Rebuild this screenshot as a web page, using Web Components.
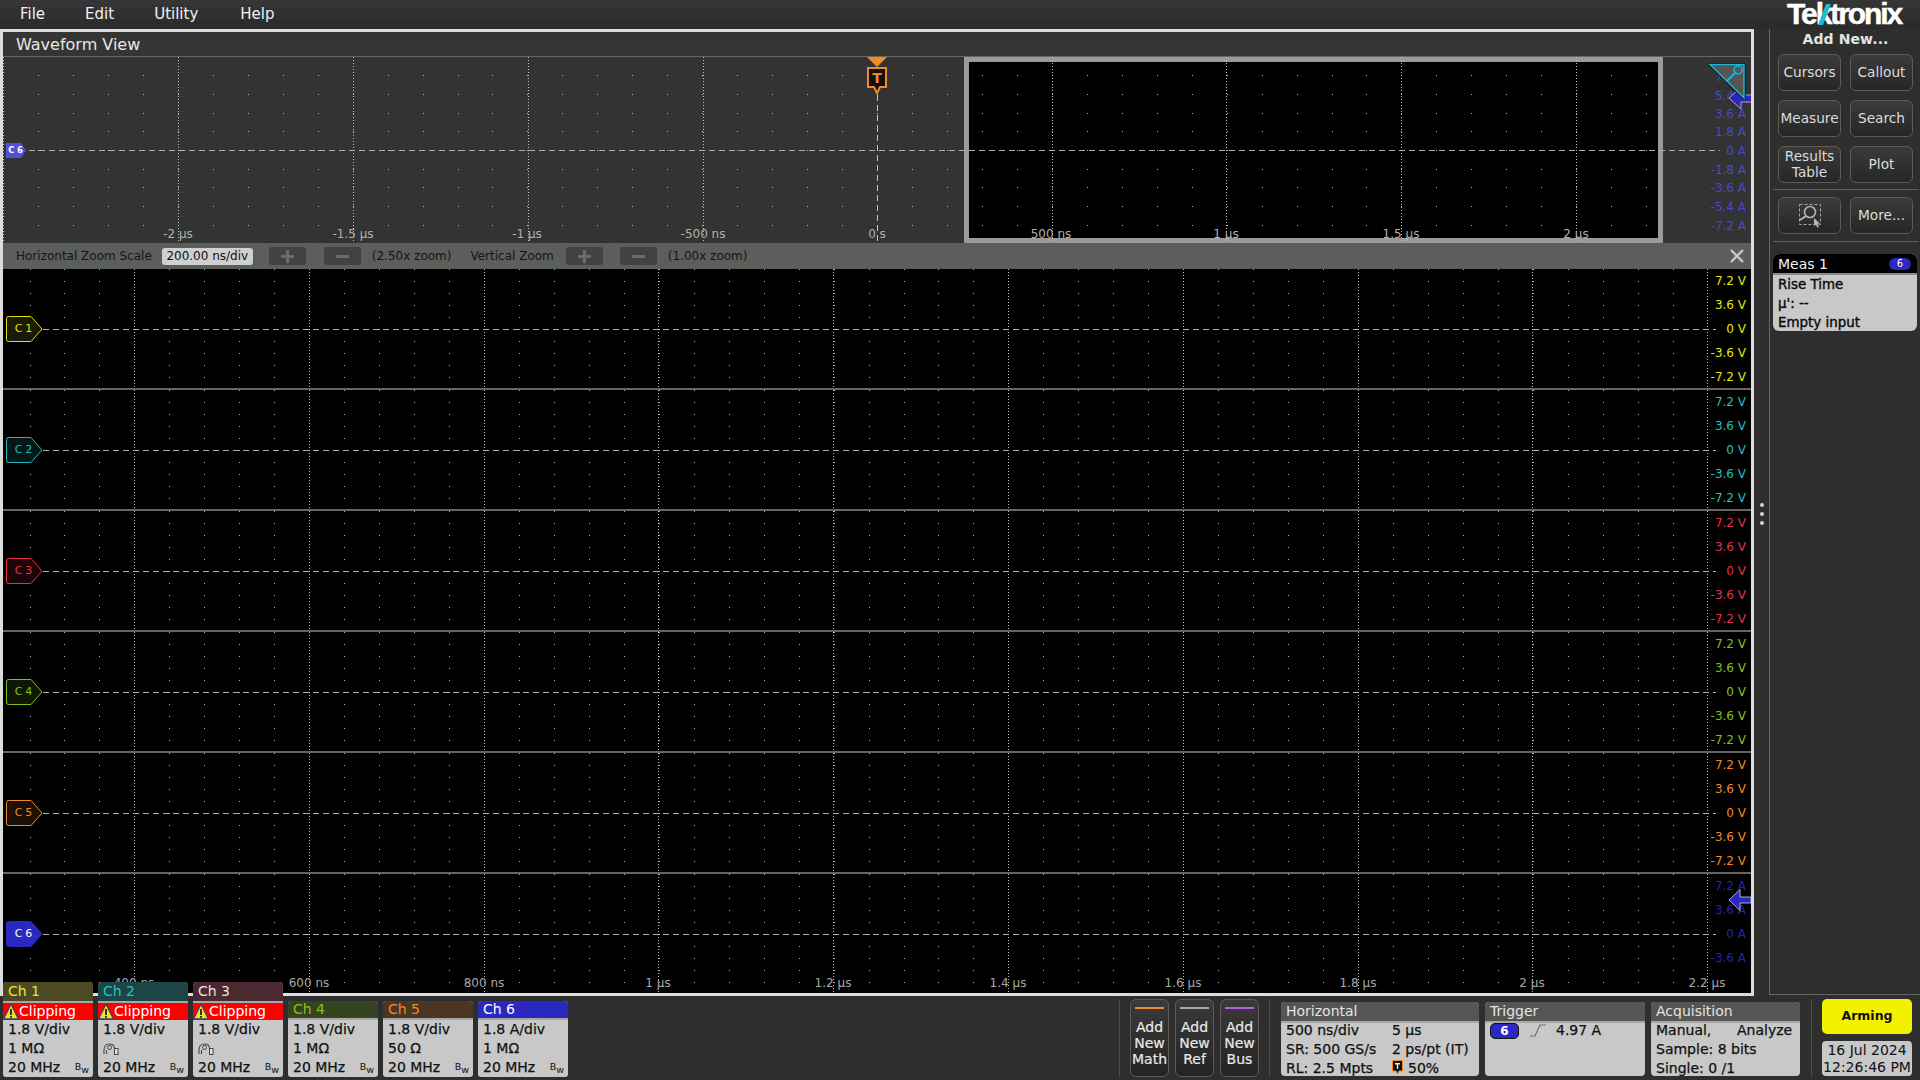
<!DOCTYPE html>
<html>
<head>
<meta charset="utf-8">
<title>Waveform View</title>
<style>
  html, body { margin: 0; background: #2e2e2e; }
  body { width: 1920px; height: 1080px; overflow: hidden; font-family: "DejaVu Sans", sans-serif; }
</style>
</head>
<body>
<scope-app></scope-app>
<script>
(function () {
    const BLUE = "#2a28c0";

    // dots and dotted lines of a plot, x and y in the coordinates of the plot
    function gridSvg(o) {
        let d = "";
        for (let x = o.x0; x <= o.x1 + 0.1; x += o.dx) {
            for (let k = -o.ny; k <= o.ny; k++) {
                let y = Math.round(o.cy + k * o.dy);
                if (y >= 0 && y < o.h) d += `M${Math.round(x)} ${y}h1v1h-1z`;
            }
        }
        let majors = o.majors.map(x =>
            `<line x1="${x}.5" x2="${x}.5" y1="0" y2="${o.h}" stroke="#c0c0c0" stroke-dasharray="1 2"/>`).join("");
        return `<svg width="1748" height="${o.h}" style="position:absolute;left:0;top:0" shape-rendering="crispEdges">
            <path d="${d}" fill="#b4b4b4"/>${majors}
            <line x1="${o.dash0}" x2="${o.dash1}" y1="${o.cy}.5" y2="${o.cy}.5" stroke="#b0b0b0" stroke-dasharray="6 4"/>
        </svg>`;
    }

    class MenuBar extends HTMLElement {
        connectedCallback() {
            this.attachShadow({ mode: "open" }).innerHTML = `
            <style>
              :host { display: flex; align-items: center; height: 29px; box-sizing: border-box; padding: 0 0 2px 20px; gap: 40px;
                      background: linear-gradient(#363636, #2a2a2a); color: #f0f0f0; font-size: 15px; position: relative; }
              .logo { margin-left: auto; margin-right: 19px; font: bold 30px "Liberation Sans", sans-serif; letter-spacing: -2.1px;
                      -webkit-text-stroke: .5px #fff; color: #fff; position: relative; line-height: 29px; }
              svg { position: absolute; left: 31px; top: 5px; }
            </style>
            <span>File</span><span>Edit</span><span>Utility</span><span style="margin-left:2px">Help</span>
            <span class="logo">Tektronix<svg width="13" height="21"><polygon points="8,0 13,0 5,21 0,21" fill="#1fb9d6"/></svg></span>`;
        }
    }

    class ChFlag extends HTMLElement {
        connectedCallback() {
            let c = this.getAttribute("color"), bg = this.getAttribute("bg"), txt = this.getAttribute("text") || c;
            this.attachShadow({ mode: "open" }).innerHTML = `
            <style>
              :host { position: absolute; left: 3px; display: block; width: 37px; height: 26px; }
              svg { position: absolute; left: 0; top: 0; }
              span { position: absolute; left: 0; width: 35px; top: 0; line-height: 26px; text-align: center; font-size: 11px; color: ${txt}; word-spacing: -.5px; white-space: nowrap; }
            </style>
            <svg width="37" height="26"><path d="M2.5 .5H25L36 13 25 25.5H2.5Q.5 25.5 .5 23.5V2.5Q.5 .5 2.5 .5Z" fill="${bg}" stroke="${c}"/></svg>
            <span>${this.getAttribute("label")}</span>`;
        }
    }

    class PlotRow extends HTMLElement {
        connectedCallback() {
            let color = this.getAttribute("color"), unit = this.getAttribute("unit");
            let vals = (this.getAttribute("vals") || "7.2,3.6,0,-3.6,-7.2").split(",");
            let ys = { "7.2": 12, "3.6": 36, "0": 60, "-3.6": 84, "-7.2": 108 };
            let labels = vals.map(v => `<i style="top:${ys[v] - 8}px">${v} ${unit}</i>`).join("");
            let majors = [];
            for (let k = 0; k < 10; k++) majors.push(Math.round(131 + k * 174.8));
            let last = this.hasAttribute("last");
            let times = ["400 ns", "600 ns", "800 ns", "1 µs", "1.2 µs", "1.4 µs", "1.6 µs", "1.8 µs", "2 µs", "2.2 µs"];
            let axis = last ? times.map((t, k) => `<b style="left:${majors[k]}px">${t}</b>`).join("") : "";
            this.attachShadow({ mode: "open" }).innerHTML = `
            <style>
              :host { display: block; position: relative; height: ${last ? 119 : 121}px; box-sizing: border-box;
                      ${last ? "" : "border-bottom: 2px solid #666;"} background: #000; overflow: hidden; }
              i { position: absolute; right: 5px; font-style: normal; font-size: 12px; line-height: 16px; color: ${color}; }
              b { position: absolute; top: 101px; font-weight: normal; font-size: 12px; line-height: 16px; color: #a8a8a8; transform: translateX(-50%); white-space: nowrap; }
            </style>
            ${gridSvg({ x0: 26.5, x1: 1673, dx: 34.96, cy: 60, dy: 12, ny: 5, h: 119, majors: majors, dash0: 40, dash1: 1713 })}
            ${labels}${axis}
            <slot></slot>`;
        }
    }

    class OverviewPlot extends HTMLElement {
        connectedCallback() {
            let majors = [0, 175, 350, 525, 700, 1049, 1223, 1398, 1573];
            let times = ["-2 µs", "-1.5 µs", "-1 µs", "-500 ns", "0 s", "500 ns", "1 µs", "1.5 µs", "2 µs"];
            let xs = [175, 350, 524, 700, 874, 1048, 1223, 1398, 1573];
            let axis = times.map((t, k) => `<b style="left:${xs[k]}px">${t}</b>`).join("");
            let amps = [["7.2", 20], ["5.4", 39], ["3.6", 57], ["1.8", 75], ["0", 94], ["-1.8", 113], ["-3.6", 131], ["-5.4", 150], ["-7.2", 169]];
            let labels = amps.map(a => `<i style="top:${a[1] - 8}px">${a[0]} A</i>`).join("");
            this.attachShadow({ mode: "open" }).innerHTML = `
            <style>
              :host { display: block; position: relative; height: 186px; background: #333; overflow: hidden; }
              .window { position: absolute; left: 961px; top: 0; width: 689px; height: 176px; border: 5px solid #9a9a9a; background: #000; }
              i { position: absolute; right: 5px; font-style: normal; font-size: 12px; line-height: 16px; color: #4a4ac4; }
              b { position: absolute; top: 169px; font-weight: normal; font-size: 12px; line-height: 16px; color: #b0b0b0; transform: translateX(-50%); white-space: nowrap; }
              svg.mark { position: absolute; left: 0; top: 0; }
              text { font: bold 14px "DejaVu Sans", sans-serif; }
            </style>
            <div class="window"></div>
            ${gridSvg({ x0: 35, x1: 1678, dx: 34.96, cy: 93, dy: 18.7, ny: 4, h: 186, majors: majors, dash0: 26, dash1: 1717 })}
            ${labels}${axis}
            <svg class="mark" width="1748" height="186">
              <line x1="874.5" x2="874.5" y1="38" y2="186" stroke="#c8c8c8" stroke-dasharray="6 4"/>
              <polygon points="864,0 884,0 874,10" fill="#f08a24"/>
              <path d="M865 11H883V30H877L874 36 871 30H865Z" fill="#111" stroke="#f08a24" stroke-width="2"/>
              <text x="874" y="26" text-anchor="middle" fill="#f08a24">T</text>
              <path d="M1726 41L1738 30V38H1749V45H1738V52Z" fill="${BLUE}" stroke="#a9a9c8"/>
              <polygon points="1707,7.5 1741,7.5 1741,41" fill="#555" stroke="#000" stroke-width="3" stroke-linejoin="round"/>
              <polygon points="1707,7.5 1741,7.5 1741,41" fill="#555" stroke="#1cb8d8" stroke-width="1.5"/>
              <line x1="1724" y1="24" x2="1733" y2="15" stroke="#1cb8d8" stroke-width="2"/>
              <circle cx="1735" cy="13" r="4" fill="none" stroke="#1cb8d8" stroke-width="1.5"/>
            </svg>
            <ov-flag></ov-flag>`;
        }
    }

    class OvFlag extends HTMLElement {
        connectedCallback() {
            this.attachShadow({ mode: "open" }).innerHTML = `
            <style>
              :host { position: absolute; left: 3px; top: 86px; width: 20px; height: 15px; display: block; }
              svg { position: absolute; left: 0; top: 0; }
              span { position: absolute; left: 0; width: 19px; text-align: center; line-height: 15px; font-size: 8.5px; font-weight: bold; word-spacing: -.5px; color: #fff; white-space: nowrap; }
            </style>
            <svg width="20" height="15"><path d="M0 0H15L20 7.5 15 15H0Z" fill="#5050d8"/></svg>
            <span>C 6</span>`;
        }
    }

    class ZoomBar extends HTMLElement {
        connectedCallback() {
            this.attachShadow({ mode: "open" }).innerHTML = `
            <style>
              :host { display: flex; align-items: center; height: 26px; background: #5c5e5c; color: #141414; font-size: 12px; white-space: nowrap; position: relative; }
              .val { box-sizing: border-box; width: 91px; height: 17px; line-height: 17px; background: #d0d0d0; border-radius: 3px; text-align: center; color: #111; margin-left: 10px; }
              .btn { box-sizing: border-box; width: 37px; height: 18px; background: #414241; border-radius: 3px; position: relative; }
              .btn svg { position: absolute; left: 12px; top: 3px; }
              .close { position: absolute; right: 7px; top: 6px; }
            </style>
            <span style="margin-left:13px">Horizontal Zoom Scale</span>
            <span class="val">200.00 ns/div</span>
            <span class="btn" style="margin-left:16px"><svg width="13" height="13"><path d="M5 0h3v5h5v3H8v5H5V8H0V5h5z" fill="#6c6c6c"/></svg></span>
            <span class="btn" style="margin-left:18px"><svg width="13" height="13"><path d="M0 5h13v3H0z" fill="#6c6c6c"/></svg></span>
            <span style="margin-left:11px">(2.50x zoom)</span>
            <span style="margin-left:19px">Vertical Zoom</span>
            <span class="btn" style="margin-left:12px"><svg width="13" height="13"><path d="M5 0h3v5h5v3H8v5H5V8H0V5h5z" fill="#6c6c6c"/></svg></span>
            <span class="btn" style="margin-left:17px"><svg width="13" height="13"><path d="M0 5h13v3H0z" fill="#6c6c6c"/></svg></span>
            <span style="margin-left:11px">(1.00x zoom)</span>
            <svg class="close" width="14" height="14"><path d="M1 1L13 13M13 1L1 13" stroke="#c8c8c8" stroke-width="2.4"/></svg>`;
        }
    }

    class WaveformView extends HTMLElement {
        connectedCallback() {
            this.attachShadow({ mode: "open" }).innerHTML = `
            <style>
              :host { display: block; width: 1754px; height: 967px; box-sizing: border-box; border: 3px solid #dcdcdc; background: #000; position: relative; }
              .title { height: 25px; box-sizing: border-box; border-bottom: 1px solid #666; background: #353533; color: #e8e8e8; font-size: 16px; line-height: 26px; padding-left: 13px; }
            </style>
            <div class="title">Waveform View</div>
            <overview-plot></overview-plot>
            <zoom-bar></zoom-bar>
            <plot-row color="#e8e800" unit="V"><ch-flag style="top:47px" label="C 1" color="#e0e000" bg="#1a1a06"></ch-flag></plot-row>
            <plot-row color="#20c0c4" unit="V"><ch-flag style="top:47px" label="C 2" color="#20b8bc" bg="#04181a"></ch-flag></plot-row>
            <plot-row color="#e83048" unit="V"><ch-flag style="top:47px" label="C 3" color="#e83048" bg="#1c0508"></ch-flag></plot-row>
            <plot-row color="#84c020" unit="V"><ch-flag style="top:47px" label="C 4" color="#84c020" bg="#0f1804"></ch-flag></plot-row>
            <plot-row color="#f08a24" unit="V"><ch-flag style="top:47px" label="C 5" color="#f08a24" bg="#1c1005"></ch-flag></plot-row>
            <plot-row color="#2424b8" unit="A" vals="7.2,3.6,0,-3.6" last>
              <ch-flag style="top:47px" label="C 6" color="${BLUE}" bg="${BLUE}" text="#fff"></ch-flag>
              <svg width="26" height="24" style="position:absolute;right:0;top:14px"><path d="M4 12L15 1.5V9H26V15H15V22.5Z" fill="${BLUE}" stroke="#a9a9c8"/></svg>
            </plot-row>`;
        }
    }

    class SideButton extends HTMLElement {
        connectedCallback() {
            this.attachShadow({ mode: "open" }).innerHTML = `
            <style>
              :host { display: flex; align-items: center; justify-content: center; text-align: center; box-sizing: border-box; width: 63px; height: 37px; padding-bottom: 2px;
                      border: 1px solid #5e5a54; border-radius: 6px; background: linear-gradient(#3b3b3b, #262626); color: #dcdcdc; font-size: 13.7px; line-height: 16px; white-space: nowrap; }
            </style>
            <slot></slot>`;
        }
    }

    class MeasBadge extends HTMLElement {
        connectedCallback() {
            this.attachShadow({ mode: "open" }).innerHTML = `
            <style>
              :host { display: block; width: 144px; border-radius: 6px; overflow: hidden; background: #c8c8c8; color: #0c0c0c; font-size: 13.4px; -webkit-text-stroke: .4px #0c0c0c; line-height: 19px; }
              .head { height: 19px; background: #000; border-bottom: 2px solid #8a8a8a; color: #f2f2f2; font-size: 14px; -webkit-text-stroke: 0; line-height: 18px; padding-left: 5px; display: flex; align-items: center; justify-content: space-between; }
              .pill { width: 22px; height: 12px; margin-right: 6px; border-radius: 6px; background: ${BLUE}; color: #fff; font-size: 10px; line-height: 12px; text-align: center; }
              .body { padding: 0 5px 0 5px; height: 56px; white-space: nowrap; }
            </style>
            <div class="head"><span>Meas 1</span><span class="pill">6</span></div>
            <div class="body">Rise Time<br>µ': --<br>Empty input</div>`;
        }
    }

    class SidePanel extends HTMLElement {
        connectedCallback() {
            this.attachShadow({ mode: "open" }).innerHTML = `
            <style>
              :host { display: block; position: relative; width: 166px; height: 967px; box-sizing: border-box; padding-left: 15px; }
              .box { height: 966px; box-sizing: border-box; border-left: 1px solid #686868; border-bottom: 1px solid #686868; }
              h3 { margin: 0; height: 25px; font-size: 14px; line-height: 21px; text-align: center; color: #e4e4e4; width: 151px; letter-spacing: .1px; }
              .btns { display: grid; grid-template-columns: 63px 63px; column-gap: 9px; row-gap: 9px; padding-left: 8px; }
              hr { margin: 6px 1px 7px 3px; border: 0; height: 1px; background: #5e5e5e; }
              meas-badge { margin: 12px 0 0 3px; }
              .grip { position: absolute; left: 6px; top: 474px; width: 4px; }
              .grip u { display: block; width: 4px; height: 4px; border-radius: 50%; margin-bottom: 5px; background: #d4d4d4; }
            </style>
            <div class="grip"><u></u><u></u><u></u></div>
            <div class="box">
              <h3>Add New...</h3>
              <div class="btns">
                <side-button>Cursors</side-button><side-button>Callout</side-button>
                <side-button>Measure</side-button><side-button>Search</side-button>
                <side-button>Results<br>Table</side-button><side-button>Plot</side-button>
              </div>
              <hr>
              <div class="btns">
                <side-button>
                  <svg width="30" height="26" viewBox="0 0 30 26">
                    <rect x="4.5" y="2.5" width="21" height="20" fill="none" stroke="#a8a8a8" stroke-dasharray="3 2"/>
                    <circle cx="15" cy="10" r="5.5" fill="none" stroke="#b4b4b4" stroke-width="1.6"/>
                    <line x1="11" y1="14" x2="5" y2="18" stroke="#b4b4b4" stroke-width="2"/>
                    <path d="M19 16l6 5.5-2.6.2 1.6 3.3-1.6.7-1.5-3.3-2 1.8z" fill="#b8b8b8"/>
                  </svg>
                </side-button>
                <side-button>More...</side-button>
              </div>
              <hr style="margin-top:7px">
              <meas-badge></meas-badge>
            </div>`;
        }
    }

    class ChBadge extends HTMLElement {
        connectedCallback() {
            let clip = this.hasAttribute("clip");
            let probe = this.hasAttribute("probe");
            let warn = `<svg width="16" height="17" viewBox="0 0 16 17"><polygon points="8,1 15.4,16 .6,16" fill="#f2e21c" stroke="#3c3c70" stroke-width="1.3"/><rect x="7.1" y="6" width="1.8" height="6" fill="#222"/><rect x="7.1" y="13" width="1.8" height="1.8" fill="#222"/></svg>`;
            let probeIcon = `<svg width="16" height="12" viewBox="0 0 16 12"><path d="M1 11V7Q1 1 6.5 1 11 1 11.5 5M3.5 11V7" fill="none" stroke="#444" stroke-width="1.1"/><circle cx="6.5" cy="4.5" r="2" fill="none" stroke="#444"/><rect x="11.5" y="5.5" width="3.5" height="6" fill="#e4e4e4" stroke="#444"/></svg>`;
            this.attachShadow({ mode: "open" }).innerHTML = `
            <style>
              :host { display: block; width: 90px; border-radius: 4px 4px 3px 3px; overflow: hidden; background: #c8c8c8; color: #111; font-size: 14px; line-height: 19px; -webkit-text-stroke: .25px #111; white-space: nowrap; }
              .head { box-sizing: border-box; height: ${clip ? 21 : 19}px; border-bottom: 2px solid #a8a8a8; background: ${this.getAttribute("bg")}; color: ${this.getAttribute("color")}; padding-left: 5px; line-height: ${clip ? 19 : 17}px; -webkit-text-stroke: 0; }
              .clip { height: 17px; background: #f00; color: #fff; display: flex; align-items: center; line-height: 17px; -webkit-text-stroke: 0; }
              .clip svg { flex: none; }
              .body { height: 57px; padding-left: 5px; position: relative; }
              .row { height: 19px; display: flex; align-items: center; }
              .bw { position: absolute; right: 4px; bottom: 5px; font-size: 9.5px; line-height: 10px; -webkit-text-stroke: 0; }
              .bw sub { font-size: 9.5px; line-height: 0; vertical-align: -3px; }
            </style>
            <div class="head">${this.getAttribute("name")}</div>
            ${clip ? `<div class="clip">${warn}Clipping</div>` : ""}
            <div class="body">
              <div class="row">${this.getAttribute("scale")}</div>
              <div class="row">${probe ? probeIcon : this.getAttribute("term")}</div>
              <div class="row">20 MHz</div>
              <span class="bw">B<sub>w</sub></span>
            </div>`;
        }
    }

    class AddButton extends HTMLElement {
        connectedCallback() {
            this.attachShadow({ mode: "open" }).innerHTML = `
            <style>
              :host { display: block; box-sizing: border-box; width: 39px; height: 78px; border: 1px solid #5e5a54; border-radius: 6px; background: linear-gradient(#3a3a3a, #242424); color: #e8e8e8; font-size: 14px; line-height: 16px; text-align: center; white-space: nowrap; }
              .bar { height: 2px; margin: 7px 4px 10px; background: ${this.getAttribute("color")}; }
              div.t { margin: 0 -2px; -webkit-text-stroke: .2px #e8e8e8; }
            </style>
            <div class="bar"></div>
            <div class="t"><slot></slot></div>`;
        }
    }

    class StatusPanel extends HTMLElement {
        connectedCallback() {
            this.attachShadow({ mode: "open" }).innerHTML = `
            <style>
              :host { display: block; box-sizing: border-box; height: 74px; border-radius: 4px; overflow: hidden; background: #c8c8c8; color: #111; font-size: 14px; line-height: 19px; white-space: nowrap; }
              .head { box-sizing: border-box; height: 21px; border-bottom: 2px solid #a8a8a8; background: #555; color: #e4e4e4; padding-left: 5px; line-height: 19px; }
              .body { display: grid; padding-left: 5px; -webkit-text-stroke: .25px #111; margin-top: -2px; grid-template-columns: ${this.getAttribute("cols") || "1fr"}; align-items: center; }
              ::slotted(*) { height: 19px; }
            </style>
            <div class="head">${this.getAttribute("title")}</div>
            <div class="body"><slot></slot></div>`;
        }
    }

    class StatusBar extends HTMLElement {
        connectedCallback() {
            this.attachShadow({ mode: "open" }).innerHTML = `
            <style>
              :host { display: flex; align-items: flex-end; height: 84px; box-sizing: border-box; padding: 0 8px 3px 3px; position: relative; z-index: 2; background: #2e2e2e; }
              .channels { display: flex; align-items: flex-end; gap: 5px; }
              .actions { display: flex; align-items: flex-end; margin-left: auto; }
              .sep { width: 1px; height: 78px; background: #4a4a4a; }
              .adds { display: flex; gap: 6px; margin: 0 10px; }
              .panels { display: flex; gap: 6px; margin: 0 11px 1px 11px; }
              .cell { display: block; }
              .flow { display: flex; align-items: center; grid-column: 1 / -1; }
              .pill { display: inline-block; box-sizing: border-box; width: 29px; height: 16px; line-height: 14px; text-align: center; border-radius: 5px; border: 1px solid #111; background: ${BLUE}; color: #fff; font-size: 12px; font-weight: bold; -webkit-text-stroke: 0; margin-right: 11px; }
              .tmark { display: inline-block; vertical-align: -2px; margin-right: 5px; }
              .run { display: flex; flex-direction: column; gap: 7px; margin-left: 10px; width: 90px; }
              .arming { height: 35px; border-radius: 5px; background: #f2f200; color: #111; font-size: 12.5px; font-weight: bold; line-height: 33px; text-align: center; }
              .date { height: 35px; border-radius: 4px; background: #c8c8c8; color: #111; font-size: 14px; line-height: 17px; text-align: center; box-sizing: border-box; padding-top: 1px; white-space: nowrap; margin-bottom: 1px; }
            </style>
            <div class="channels">
              <ch-badge name="Ch 1" bg="#4c4a24" color="#e8e820" scale="1.8 V/div" term="1 MΩ" clip></ch-badge>
              <ch-badge name="Ch 2" bg="#1e4546" color="#22c4c8" scale="1.8 V/div" clip probe></ch-badge>
              <ch-badge name="Ch 3" bg="#4a2a30" color="#f0e0e0" scale="1.8 V/div" clip probe></ch-badge>
              <ch-badge name="Ch 4" bg="#36431f" color="#84c020" scale="1.8 V/div" term="1 MΩ"></ch-badge>
              <ch-badge name="Ch 5" bg="#4b3524" color="#f08a24" scale="1.8 V/div" term="50 Ω"></ch-badge>
              <ch-badge name="Ch 6" bg="${BLUE}" color="#fff" scale="1.8 A/div" term="1 MΩ"></ch-badge>
            </div>
            <div class="actions">
              <div class="sep"></div>
              <div class="adds">
                <add-button color="#f08a24">Add<br>New<br>Math</add-button>
                <add-button color="#a8a8b0">Add<br>New<br>Ref</add-button>
                <add-button color="#b060e8">Add<br>New<br>Bus</add-button>
              </div>
              <div class="sep"></div>
              <div class="panels">
                <status-panel title="Horizontal" cols="106px 1fr" style="width:198px">
                  <span class="cell">500 ns/div</span><span class="cell">5 µs</span>
                  <span class="cell">SR: 500 GS/s</span><span class="cell">2 ps/pt (IT)</span>
                  <span class="cell">RL: 2.5 Mpts</span>
                  <span class="cell"><svg class="tmark" width="11" height="15" viewBox="0 0 11 15"><path d="M.5 .5H10.5V11H7L5.5 14 4 11H.5Z" fill="#111" stroke="#f08a24"/><path d="M3 3H8V4.5H6.2V9H4.8V4.5H3Z" fill="#eee"/></svg>50%</span>
                </status-panel>
                <status-panel title="Trigger" style="width:160px">
                  <span class="flow"><span class="pill">6</span><svg width="16" height="15" viewBox="0 0 16 15" style="margin-right:10px"><path d="M0 13H5L10 2H16" fill="none" stroke="#6a6a88" stroke-width="1.2"/></svg>4.97 A</span>
                </status-panel>
                <status-panel title="Acquisition" cols="81px 1fr" style="width:149px">
                  <span class="cell">Manual,</span><span class="cell">Analyze</span>
                  <span class="cell" style="grid-column:1/-1">Sample: 8 bits</span>
                  <span class="cell" style="grid-column:1/-1">Single: 0 /1</span>
                </status-panel>
              </div>
              <div class="sep"></div>
              <div class="run">
                <div class="arming">Arming</div>
                <div class="date">16 Jul 2024<br>12:26:46 PM</div>
              </div>
            </div>`;
        }
    }

    class ScopeApp extends HTMLElement {
        connectedCallback() {
            this.attachShadow({ mode: "open" }).innerHTML = `
            <style>
              :host { display: block; width: 1920px; height: 1080px; background: #2e2e2e; }
              .mid { display: flex; }
            </style>
            <menu-bar></menu-bar>
            <div class="mid"><waveform-view></waveform-view><side-panel></side-panel></div>
            <status-bar></status-bar>`;
        }
    }

    customElements.define("menu-bar", MenuBar);
    customElements.define("ch-flag", ChFlag);
    customElements.define("plot-row", PlotRow);
    customElements.define("ov-flag", OvFlag);
    customElements.define("overview-plot", OverviewPlot);
    customElements.define("zoom-bar", ZoomBar);
    customElements.define("waveform-view", WaveformView);
    customElements.define("side-button", SideButton);
    customElements.define("meas-badge", MeasBadge);
    customElements.define("side-panel", SidePanel);
    customElements.define("ch-badge", ChBadge);
    customElements.define("add-button", AddButton);
    customElements.define("status-panel", StatusPanel);
    customElements.define("status-bar", StatusBar);
    customElements.define("scope-app", ScopeApp);
})();
</script>
</body>
</html>
